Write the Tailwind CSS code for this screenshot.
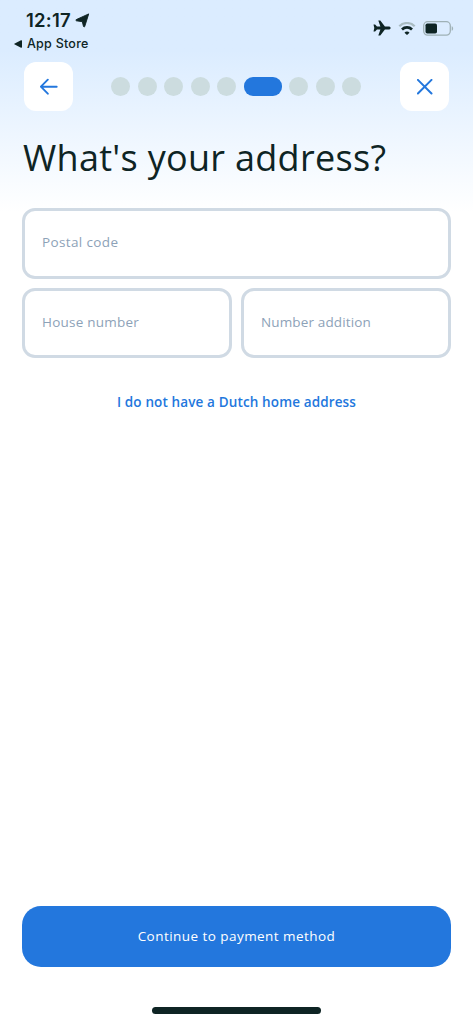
<!DOCTYPE html>
<html lang="en">
<head>
<meta charset="utf-8">
<title>What's your address?</title>
<script src="https://cdn.jsdelivr.net/npm/@tailwindcss/browser@4"></script>
</head>
<body class="bg-white">
<div class="flex h-[1024px] w-[473px] flex-col overflow-hidden bg-linear-to-b from-[#dbecff] from-[50px] to-white to-[212px] font-['Open_Sans','Noto_Sans',sans-serif] text-[#0e2424]">
  <header class="flex h-[62px] shrink-0 justify-between pl-[14px] pr-[19px] font-['Inter',sans-serif]">
    <div class="pt-[8px]">
      <div class="flex h-[24px] items-center gap-[4px] pl-[12px]">
        <span class="text-[18.500px] font-semibold leading-[24px] tracking-[0.25px]">12:17</span>
        <svg class="size-[15px]" viewBox="0 0 15 15"><path d="M13.700.9 9.700 13.600Q9.200 14.400 8.500 13.500L7.300 8.700 1.400 7.800Q.3 7.300 1.300 6.600Z" fill="currentColor" stroke="currentColor" stroke-width=".9" stroke-linejoin="round"/></svg>
      </div>
      <div class="flex h-[20px] items-center gap-[5px] pt-[4px]">
        <svg class="h-[8px] w-[8px]" viewBox="0 0 8 8"><path d="M.3 4.300Q0 4 .3 3.700L7 .3Q8 0 8 1v6Q8 8 7 7.700Z" fill="currentColor"/></svg>
        <span class="text-[12.500px] font-medium leading-[20px] tracking-[0.25px]">App Store</span>
      </div>
    </div>
    <div class="flex h-[56px] items-center gap-[7px]">
      <svg class="h-[16px] w-[18px]" viewBox="0 0 18 16"><path d="M17.700 8c0-.9-1-1.500-2.200-1.500h-3.600L7.300.5H5.300l2.100 6H4L2.100 4.500H.5L1.300 8 .5 11.500h1.600L4 9.500h3.400l-2.100 6h2l4.600-6h3.600c1.200 0 2.200-.6 2.200-1.500Z" fill="currentColor"/></svg>
      <svg class="h-[13px] w-[18px]" viewBox="-.5 0 18 13" fill="none"><path d="M.8 4.200a10.900 10.900 0 0 1 15.400 0" stroke="#a9bcc2" stroke-width="2.200"/><path d="M3.500 7.500a7.100 7.100 0 0 1 10 0" stroke="currentColor" stroke-width="2.700"/><path d="M8.500 13 6 10.700a3.400 3.400 0 0 1 5 0Z" fill="currentColor"/></svg>
      <svg class="h-[15px] w-[31px]" viewBox="0 0 31 15"><rect x=".7" y=".7" width="26.600" height="13.400" rx="4" fill="none" stroke="#9fb1b6" stroke-width="1.300"/><rect x="2.500" y="2.500" width="11.500" height="10" rx="1.800" fill="currentColor"/><path d="M28.700 5.200c1.900.7 1.900 3.900 0 4.600Z" fill="#9fb1b6"/></svg>
    </div>
  </header>
  <nav class="flex h-[49px] shrink-0 items-center justify-between px-[24px]">
    <button class="flex size-[49px] items-center justify-center rounded-[12px] bg-white">
      <svg class="size-[18px]" viewBox="0 0 18 18" fill="none" stroke="#2377dd" stroke-width="1.900" stroke-linecap="round" stroke-linejoin="round"><path d="M16.700 8.700H.9M7.800 1.700.900 8.700l6.900 7"/></svg>
    </button>
    <div class="flex items-center gap-[7.500px] pr-px">
      <i class="size-[19px] rounded-full bg-[#ccdcdf]"></i>
      <i class="size-[19px] rounded-full bg-[#ccdcdf]"></i>
      <i class="size-[19px] rounded-full bg-[#ccdcdf]"></i>
      <i class="size-[19px] rounded-full bg-[#ccdcdf]"></i>
      <i class="size-[19px] rounded-full bg-[#ccdcdf]"></i>
      <i class="h-[19px] w-[38px] rounded-[9px] bg-[#2377dd]"></i>
      <i class="size-[19px] rounded-full bg-[#ccdcdf]"></i>
      <i class="size-[19px] rounded-full bg-[#ccdcdf]"></i>
      <i class="size-[19px] rounded-full bg-[#ccdcdf]"></i>
    </div>
    <button class="flex size-[49px] items-center justify-center rounded-[12px] bg-white">
      <svg class="size-[16px]" viewBox="0 0 16 16" fill="none" stroke="#2377dd" stroke-width="2" stroke-linecap="round"><path d="m.9.900 13.600 13.600M14.500.9.900 14.500"/></svg>
    </button>
  </nav>
  <main class="flex grow flex-col px-[22px]">
    <h1 class="mt-[23px] h-[74px] whitespace-nowrap pl-px text-[36px] leading-[48px] tracking-[0.3px]">What's your address?</h1>
    <div class="grid grid-cols-2 gap-x-[9px] gap-y-[9px] text-[13.500px] text-[#8da2b8]">
      <div class="col-span-2 flex h-[71px] items-center rounded-[13px] border-[3px] border-[#d0dae4] bg-white pb-[2px] pl-[17px]"><span class="tracking-[0.37px]">Postal code</span></div>
      <div class="flex h-[70px] items-center rounded-[13px] border-[3px] border-[#d0dae4] bg-white pb-[2px] pl-[17px]"><span class="tracking-[0.23px]">House number</span></div>
      <div class="flex h-[70px] items-center rounded-[13px] border-[3px] border-[#d0dae4] bg-white pb-[2px] pl-[17px]"><span class="tracking-[0.14px]">Number addition</span></div>
    </div>
    <a class="mt-[34px] whitespace-nowrap text-center text-[13.500px] font-semibold leading-[20px] tracking-[0.13px] text-[#2377dd]">I do not have a Dutch home address</a>
    <button class="mt-auto flex h-[61px] shrink-0 items-center justify-center rounded-[19px] bg-[#2377dd] text-[13.500px] font-medium tracking-[0.45px] text-white">Continue to payment method</button>
    <div class="mx-auto mb-[10px] mt-[40px] h-[7px] w-[169px] shrink-0 rounded-full bg-[#0e2424]"></div>
  </main>
</div>
</body>
</html>
